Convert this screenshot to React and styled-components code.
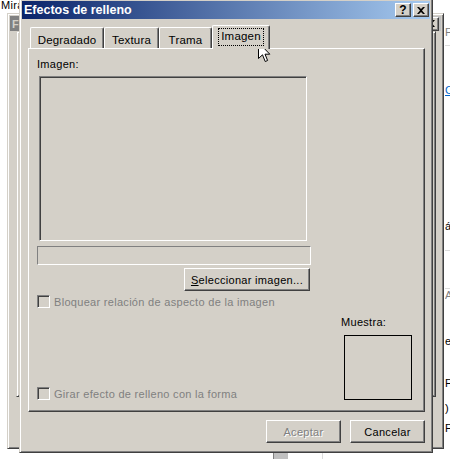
import styled, { createGlobalStyle, css } from "styled-components"

const face = "#d4d0c8"
const shadow = "#808080"
const dark = "#404040"

const GlobalStyle = createGlobalStyle`
  html, body { margin: 0; padding: 0; background: #fff; }
  body {
    font-family: "Liberation Sans", Arial, sans-serif;
    font-size: 11px;
    letter-spacing: 0.3px;
    color: #000;
  }
  #root { width: 450px; height: 459px; }
`

const raisedWindow = css`
  border: 1px solid;
  border-color: ${face} ${dark} ${dark} ${face};
  box-shadow: inset 1px 1px 0 #fff, inset -1px -1px 0 ${shadow};
`

const raisedButton = css`
  border: 1px solid;
  border-color: #fff ${dark} ${dark} #fff;
  box-shadow: inset -1px -1px 0 ${shadow};
  background: ${face};
`

const sunken = css`
  border: 1px solid;
  border-color: ${shadow} #fff #fff ${shadow};
  box-shadow: inset 1px 1px 0 ${dark}, inset -1px -1px 0 ${face};
`

const Desktop = styled.div`
  position: relative;
  width: 450px;
  height: 459px;
  overflow: hidden;
  background: #fff;
`

const PageText = styled.div`
  padding: 0 0 0 1px;
  line-height: 11px;
  font-size: 11px;
`

const SidePage = styled.div`
  position: absolute;
  left: 445px;
  top: 0;
  width: 5px;
  height: 459px;
  overflow: hidden;
  display: flex;
  flex-direction: column;
`

const Fragment = styled.div`
  height: ${({ $h }) => $h}px;
  line-height: 13px;
  white-space: nowrap;
  color: ${({ $color }) => $color || "#000"};
  text-decoration: ${({ $link }) => ($link ? "underline" : "none")};
  border-bottom: ${({ $rule }) => ($rule ? "1px solid #dcdcdc" : "none")};
  box-sizing: border-box;
`

const BackWindow = styled.div`
  position: absolute;
  left: ${({ $x }) => $x}px;
  top: ${({ $y }) => $y}px;
  width: ${({ $w }) => $w}px;
  height: ${({ $h }) => $h}px;
  box-sizing: border-box;
  background: ${face};
  ${raisedWindow};
  padding: 2px;
`

const InactiveBar = styled.div`
  height: 15px;
  display: flex;
  align-items: center;
  justify-content: space-between;
  padding: 0 2px;
  background: linear-gradient(to right, ${shadow}, #c0c0c0);
  color: #d4d0c8;
  font-weight: bold;
`

const BottomStrip = styled.div`
  position: absolute;
  left: ${({ $x }) => $x}px;
  top: 453px;
  width: ${({ $w }) => $w}px;
  height: 6px;
  box-sizing: border-box;
  background: ${({ $fill }) => $fill};
  border-left: 1px solid ${({ $edge }) => $edge};
`

const Dialog = styled.div`
  position: absolute;
  left: 19px;
  top: -2px;
  width: 414px;
  height: 455px;
  box-sizing: border-box;
  background: ${face};
  ${raisedWindow};
  padding: 2px;
  display: flex;
  flex-direction: column;
`

const TitleBar = styled.div`
  height: 18px;
  flex-shrink: 0;
  display: flex;
  align-items: center;
  justify-content: space-between;
  padding: 0 0 0 2px;
  background: linear-gradient(to right, #0a246a, #a6caf0);
`

const Title = styled.span`
  color: #fff;
  font-weight: bold;
  font-size: 12.5px;
  letter-spacing: 0;
`

const TitleButtons = styled.div`
  display: flex;
  gap: 2px;
  padding-right: 1px;
`

const CaptionButton = styled.div`
  ${raisedButton};
  width: 16px;
  height: 14px;
  box-sizing: border-box;
  display: flex;
  align-items: center;
  justify-content: center;
  font-weight: bold;
  font-size: 12px;
  line-height: 12px;
  letter-spacing: 0;
`

const Body = styled.div`
  flex: 1;
  display: flex;
  flex-direction: column;
  padding: 6px 5px 7px 6px;
`

const TabRow = styled.div`
  height: 23px;
  display: flex;
  align-items: flex-end;
  padding-left: 2px;
  flex-shrink: 0;
`

const Tab = styled.div`
  position: relative;
  z-index: 1;
  width: ${({ $w }) => $w}px;
  height: ${({ $active }) => ($active ? 24 : 21)}px;
  margin-bottom: ${({ $active }) => ($active ? -1 : 0)}px;
  box-sizing: border-box;
  background: ${face};
  border: 1px solid;
  border-color: #fff ${dark} transparent #fff;
  border-bottom: none;
  border-radius: 2px 2px 0 0;
  box-shadow: inset -1px 0 0 ${shadow};
  display: flex;
  justify-content: center;
  padding-top: ${({ $active }) => ($active ? 3 : 4)}px;
  font-size: 11.5px;
  letter-spacing: 0.2px;
`

const FocusText = styled.span`
  outline: 1px dotted #000;
  outline-offset: 0;
  padding: 1px 2px 2px;
  height: 13px;
  line-height: 13px;
`

const TabText = styled.span`
  line-height: 13px;
  padding-top: 2px;
`

const Panel = styled.div`
  height: 364px;
  box-sizing: border-box;
  flex-shrink: 0;
  border: 1px solid;
  border-color: #fff ${dark} ${dark} #fff;
  box-shadow: inset -1px -1px 0 ${shadow};
  padding: 9px 12px 11px 8px;
  display: flex;
  flex-direction: column;
`

const Label = styled.div`
  line-height: 13px;
  height: 13px;
  margin-left: ${({ $indent }) => $indent || 0}px;
`

const ImageWell = styled.div`
  ${sunken};
  width: 268px;
  height: 165px;
  box-sizing: border-box;
  margin: 5px 0 0 2px;
`

const PathField = styled.div`
  border: 1px solid;
  border-color: ${shadow} #fff #fff ${shadow};
  width: 274px;
  height: 19px;
  box-sizing: border-box;
  margin-top: 5px;
`

const PushButton = styled.button`
  ${raisedButton};
  font-family: inherit;
  font-size: 11px;
  letter-spacing: 0.3px;
  color: ${({ disabled }) => (disabled ? shadow : "#000")};
  text-shadow: ${({ disabled }) => (disabled ? "1px 1px 0 #fff" : "none")};
  width: ${({ $w }) => $w}px;
  height: 23px;
  padding: 0;
  box-sizing: border-box;
  cursor: default;
`

const SelectButton = styled(PushButton)`
  margin: 3px 0 0 147px;
`

const CheckRow = styled.label`
  display: flex;
  align-items: center;
  gap: 4px;
  height: 13px;
  margin-top: ${({ $top }) => $top || 0}px;
  color: ${shadow};
`

const CheckBox = styled.span`
  ${sunken};
  width: 13px;
  height: 13px;
  box-sizing: border-box;
  background: ${face};
  flex-shrink: 0;
`

const LowerArea = styled.div`
  flex: 1;
  display: flex;
  justify-content: space-between;
  align-items: flex-end;
`

const Preview = styled.div`
  display: flex;
  flex-direction: column;
`

const PreviewBox = styled.div`
  width: 68px;
  height: 65px;
  box-sizing: border-box;
  border: 1px solid #000;
  margin-top: 6px;
`

const Footer = styled.div`
  display: flex;
  justify-content: flex-end;
  gap: 9px;
  margin-top: 8px;
`

const Cursor = styled.svg`
  position: absolute;
  left: 258px;
  top: 42px;
`

const sideFragments = [
  { t: "", h: 26 },
  { t: "F", h: 20, color: shadow, rule: true },
  { t: "", h: 38 },
  { t: "C", h: 136, color: "#0066cc", link: true },
  { t: "á", h: 8 },
  { t: "", h: 23, rule: true },
  { t: "", h: 38, rule: true },
  { t: "A", h: 46, color: shadow },
  { t: "el", h: 42 },
  { t: "F(", h: 25 },
  { t: ")", h: 20 },
  { t: "Fi", h: 20 },
]

const CloseGlyph = () => (
  <svg width="8" height="7" viewBox="0 0 8 7">
    <path d="M0 0h2l2 2 2-2h2L5 3.5 8 7H6L4 5 2 7H0l3-3.5z" fill="#000" />
  </svg>
)

export default function App() {
  return (
    <>
      <GlobalStyle />
      <Desktop>
        <PageText>Mirar</PageText>

        <SidePage>
          {sideFragments.map((f, i) => (
            <Fragment key={i} $h={f.h} $color={f.color} $link={f.link} $rule={f.rule}>
              {f.t}
            </Fragment>
          ))}
        </SidePage>

        <BottomStrip $x={273} $w={15} $fill="#c0c0c0" $edge={shadow} />
        <BottomStrip $x={322} $w={128} $fill="#fff" $edge="#dcdcdc" />

        <BackWindow $x={7} $y={13} $w={437} $h={436}>
          <InactiveBar>
            <span>F</span>
            <CaptionButton>
              <CloseGlyph />
            </CaptionButton>
          </InactiveBar>
        </BackWindow>
        <BackWindow $x={16} $y={31} $w={420} $h={366} />

        <Dialog>
          <TitleBar>
            <Title>Efectos de relleno</Title>
            <TitleButtons>
              <CaptionButton>?</CaptionButton>
              <CaptionButton>
                <CloseGlyph />
              </CaptionButton>
            </TitleButtons>
          </TitleBar>

          <Body>
            <TabRow>
              <Tab $w={74}><TabText>Degradado</TabText></Tab>
              <Tab $w={55}><TabText>Textura</TabText></Tab>
              <Tab $w={53}><TabText>Trama</TabText></Tab>
              <Tab $w={58} $active><FocusText>Imagen</FocusText></Tab>
            </TabRow>

            <Panel>
              <Label>Imagen:</Label>
              <ImageWell />
              <PathField />
              <SelectButton $w={126}>
                <u>S</u>eleccionar imagen...
              </SelectButton>
              <CheckRow $top={4}>
                <CheckBox />
                Bloquear relación de aspecto de la imagen
              </CheckRow>

              <LowerArea>
                <CheckRow>
                  <CheckBox />
                  Girar efecto de relleno con la forma
                </CheckRow>
                <Preview>
                  <Label $indent={-3}>Muestra:</Label>
                  <PreviewBox />
                </Preview>
              </LowerArea>
            </Panel>

            <Footer>
              <PushButton $w={75} disabled>Aceptar</PushButton>
              <PushButton $w={75}>Cancelar</PushButton>
            </Footer>
          </Body>
        </Dialog>

        <Cursor width="13" height="21" viewBox="0 0 13 21">
          <path
            d="M0.5 0.5 L0.5 16.5 L4.5 12.8 L7.2 19.5 L9.6 18.5 L7 12.2 L11.8 12.2 Z"
            fill="#fff"
            stroke="#000"
            strokeWidth="1"
            strokeLinejoin="miter"
          />
        </Cursor>
      </Desktop>
    </>
  )
}
